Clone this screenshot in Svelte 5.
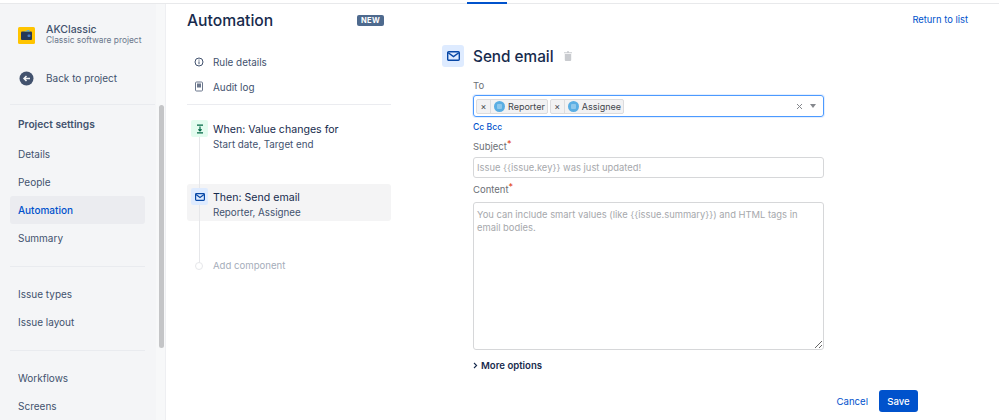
<script>
  const groups = [
    { title: 'Project settings', items: ['Details', 'People', 'Automation', 'Summary'] },
    { items: ['Issue types', 'Issue layout'] },
    { items: ['Workflows', 'Screens'] }
  ]
</script>

<div class="page">
  <div class="topline"><span class="tab-mark"></span></div>
  <div class="body">
    <aside class="sidebar">
      <div class="nav">
        <div class="project">
          <svg class="logo" width="17" height="17" viewBox="0 0 17 17">
            <rect width="17" height="17" rx="1.5" fill="#ffc400"/>
            <rect x="3" y="4.5" width="11" height="8.5" rx="1" fill="#253858"/>
            <path d="M6 4.5 L11 2.8 L12 4.5Z" fill="#4fade6"/>
            <rect x="9.5" y="7.5" width="3" height="2.5" rx="1" fill="#4c7fc4"/>
          </svg>
          <div>
            <div class="project-name">AKClassic</div>
            <div class="project-type">Classic software project</div>
          </div>
        </div>
        <div class="back">
          <svg width="15" height="15" viewBox="0 0 15 15">
            <circle cx="7.5" cy="7.5" r="7" fill="#42526e"/>
            <path d="M11 7.5H5M7.5 5L5 7.5L7.5 10" fill="none" stroke="#f4f5f7" stroke-width="1.5"/>
          </svg>
          <span>Back to project</span>
        </div>
        {#each groups as group}
          <div class="group" class:wide={group.title}>
            {#if group.title}<div class="group-title">{group.title}</div>{/if}
            {#each group.items as item}
              <div class="nav-item" class:active={item === 'Automation'}>{item}</div>
            {/each}
          </div>
        {/each}
      </div>
      <div class="scroll"><div class="thumb"></div></div>
    </aside>

    <main class="main">
      <section class="rule">
        <div class="rule-head">
          <h1>Automation</h1>
          <span class="lozenge">NEW</span>
        </div>
        <div class="links">
          <div class="link-row">
            <svg width="10" height="10" viewBox="0 0 10 10">
              <circle cx="5" cy="5" r="4" fill="none" stroke="#42526e"/>
              <path d="M5 4.4V7.2M5 2.6V3.6" stroke="#42526e"/>
            </svg>
            <span>Rule details</span>
          </div>
          <div class="link-row">
            <svg width="10" height="11" viewBox="0 0 10 11">
              <rect x="1.5" y="1" width="7" height="9" rx="1" fill="none" stroke="#6b778c"/>
              <rect x="3" y="2.5" width="4" height="4" fill="#6b778c"/>
            </svg>
            <span>Audit log</span>
          </div>
        </div>
        <div class="steps">
          <div class="line"></div>
          <div class="step first">
            <span class="step-icon green">
              <svg width="10" height="10" viewBox="0 0 10 10">
                <path d="M2 1.2H8M2 8.8H8M5 2.5V7M3.4 5.4L5 7L6.6 5.4" fill="none" stroke="#006644" stroke-width="1.2"/>
              </svg>
            </span>
            <div>
              <div class="step-title">When: Value changes for</div>
              <div class="step-sub">Start date, Target end</div>
            </div>
          </div>
          <div class="step selected">
            <span class="step-icon blue">
              <svg width="10" height="8" viewBox="0 0 10 8">
                <rect x=".6" y=".6" width="8.8" height="6.8" rx=".8" fill="none" stroke="#0747a6" stroke-width="1.2"/>
                <path d="M1 1.5L5 4.4L9 1.5" fill="none" stroke="#0747a6" stroke-width="1.2"/>
              </svg>
            </span>
            <div>
              <div class="step-title">Then: Send email</div>
              <div class="step-sub">Reporter, Assignee</div>
            </div>
          </div>
          <div class="add">
            <span class="dot"></span>
            <span>Add component</span>
          </div>
        </div>
      </section>

      <section class="editor">
        <a class="return" href="#top">Return to list</a>
        <div class="editor-head">
          <span class="head-icon">
            <svg width="13" height="10" viewBox="0 0 13 10">
              <rect x=".7" y=".7" width="11.6" height="8.6" rx="1" fill="none" stroke="#0747a6" stroke-width="1.4"/>
              <path d="M1.2 1.7L6.5 5.6L11.8 1.7" fill="none" stroke="#0747a6" stroke-width="1.4"/>
            </svg>
          </span>
          <h2>Send email</h2>
          <svg class="trash" width="8" height="10" viewBox="0 0 8 10">
            <path d="M0 1.2H8V2.2H0ZM3 .2H5V1.2H3ZM.8 3H7.2V9a1 1 0 0 1-1 1H1.8a1 1 0 0 1-1-1Z" fill="#c9cbcf"/>
          </svg>
        </div>
        <div class="form">
          <div class="label to-label">To</div>
          <div class="multi">
            {#each ['Reporter', 'Assignee'] as who}
              <span class="chip">
                <span class="chip-x">×</span>
                <span class="chip-main">
                  <span class="avatar"><span></span></span>
                  {who}
                </span>
              </span>
            {/each}
            <span class="multi-tools">
              <svg width="7" height="7" viewBox="0 0 7 7">
                <path d="M1 1L6 6M6 1L1 6" stroke="#85888d" stroke-width="1"/>
              </svg>
              <span class="caret"></span>
            </span>
          </div>
          <div class="ccbcc">Cc Bcc</div>
          <div class="label">Subject<span class="req">*</span></div>
          <input class="field" placeholder={'Issue {{issue.key}} was just updated!'} />
          <div class="label content-label">Content<span class="req">*</span></div>
          <textarea class="field area" placeholder={'You can include smart values (like {{issue.summary}}) and HTML tags in email bodies.'}></textarea>
          <div class="more">
            <svg width="5" height="7" viewBox="0 0 5 7">
              <path d="M1 1L3.6 3.5L1 6" fill="none" stroke="#172b4d" stroke-width="1.1"/>
            </svg>
            <span>More options</span>
          </div>
          <div class="actions">
            <span class="cancel">Cancel</span>
            <button class="save" type="button">Save</button>
          </div>
        </div>
      </section>
    </main>
  </div>
</div>

<style>
  :global(body) {
    margin: 0;
    background: #fff;
    font-family: Inter, "Noto Sans", sans-serif;
    color: #172b4d;
  }
  .page {
    width: 999px;
    height: 420px;
    overflow: hidden;
    position: relative;
  }
  .topline {
    height: 4px;
    background: #fff;
    border-bottom: 1px solid #e8e9eb;
    box-sizing: border-box;
    padding-left: 467px;
    padding-top: 2px;
  }
  .tab-mark {
    display: block;
    width: 40px;
    height: 2px;
    background: #0052cc;
    position: relative;
  }
  .body { display: flex; height: 416px; }

  .sidebar {
    width: 166px;
    flex: none;
    background: #f4f5f7;
    display: flex;
    border-right: 1px solid #eeeff2;
    box-sizing: border-box;
  }
  .nav { width: 156px; flex: none; padding-left: 10px; box-sizing: border-box; }
  .project { display: flex; align-items: center; gap: 11px; padding: 16px 0 0 8px; height: 30px; }
  .project-name { font-size: 10.5px; font-weight: 500; color: #42526e; line-height: 10px; }
  .project-type { font-size: 8.4px; color: #6b778c; line-height: 10px; }
  .back {
    display: flex; align-items: center; gap: 12px;
    padding-left: 9px;
    margin-top: 18px;
    height: 20px;
    font-size: 10px;
    color: #42526e;
  }
  .group { border-top: 1px solid #e9ebef; padding: 13px 0 14px; width: 135px; }
  .group.wide { width: 145px; margin-top: 16px; }
  .group-title { font-size: 10.2px; font-weight: 600; color: #42526e; padding: 0 8px; height: 22px; line-height: 13px; }
  .nav-item {
    width: 135px;
    box-sizing: border-box;
    height: 28px;
    line-height: 28px;
    padding: 0 8px;
    font-size: 10px;
    color: #42526e;
    border-radius: 3px;
  }
  .nav-item.active { background: #ebecf0; color: #0052cc; font-weight: 500; }
  .scroll { flex: 1; background: #f7f8f9; }
  .thumb { width: 5px; height: 243px; margin: 101px 0 0 3px; border-radius: 3px; background: #c4c5c7; }

  .main { flex: 1; display: flex; min-width: 0; }
  .rule { width: 204px; margin-left: 21px; flex: none; }
  .rule-head { display: flex; align-items: center; height: 32px; }
  h1 { margin: 0; font-size: 15.7px; font-weight: 500; color: #172b4d; flex: 1; }
  .lozenge {
    background: #4e6a8e;
    color: #fff;
    font-size: 7.5px;
    font-weight: 700;
    border-radius: 2px;
    padding: 0 4px;
    margin-right: 7px;
    line-height: 11px;
    letter-spacing: .3px;
  }
  .links { padding: 14px 0 5px 7px; border-bottom: 1px solid #ebecf0; }
  .link-row {
    display: flex; align-items: center; gap: 9px;
    height: 24.5px;
    font-size: 9.9px;
    color: #42526e;
  }
  .steps { position: relative; padding-top: 11px; }
  .line { position: absolute; left: 12px; top: 31px; width: 1px; height: 127px; background: #e6e7ea; z-index: 1; }
  .step { display: flex; gap: 5px; position: relative; padding: 6px 0 0 4px; height: 37px; box-sizing: border-box; border-radius: 3px; }
  .step.first { margin-bottom: 31px; }
  .step.selected { background: #f4f4f5; }
  .step-icon { width: 17px; height: 17px; border-radius: 2px; display: flex; align-items: center; justify-content: center; flex: none; margin-top: -2px; position: relative; z-index: 2; }
  .green { background: #e3fcef; }
  .blue { background: #deebff; }
  .step-title { font-size: 10.6px; line-height: 15px; color: #172b4d; }
  .step-sub { font-size: 9.8px; line-height: 15px; color: #42526e; }
  .add {
    display: flex; align-items: center; gap: 10px;
    position: relative;
    z-index: 2;
    margin: 39px 0 0 8px;
    font-size: 9.6px;
    color: #a5adba;
  }
  .dot { width: 8px; height: 8px; border-radius: 50%; background: #fff; border: 1px solid #e6e7ea; box-sizing: border-box; }

  .editor { flex: 1; position: relative; margin-left: 51px; padding-top: 40px; }
  .return { position: absolute; right: 31px; top: 10px; font-size: 9.4px; color: #0052cc; text-decoration: none; }
  .editor-head { display: flex; align-items: center; height: 24px; }
  .head-icon { width: 22px; height: 22px; border-radius: 3px; background: #deebff; display: flex; align-items: center; justify-content: center; }
  h2 { margin: 0 0 0 9px; font-size: 15.3px; font-weight: 500; color: #172b4d; }
  .trash { margin-left: 10px; }
  .form { width: 351px; margin-left: 31px; position: relative; }
  .label { font-size: 9.5px; color: #6b6f76; line-height: 14px; }
  .to-label { margin-top: 11px; margin-bottom: 2px; }
  .req { color: #de350b; vertical-align: 3px; font-size: 9px; line-height: 0; }
  .multi {
    height: 22px;
    box-sizing: border-box;
    border: 1px solid #4c9aff;
    border-radius: 3px;
    box-shadow: 0 0 0 1px #e4effe;
    display: flex;
    align-items: center;
    gap: 2px;
    padding-left: 2px;
  }
  .chip {
    display: flex;
    height: 15px;
    box-sizing: border-box;
    background: #f2f2f3;
    border: 1px solid #dcdcde;
    border-radius: 2px;
    font-size: 9px;
    line-height: 13px;
    color: #43464b;
  }
  .chip-x { width: 13px; text-align: center; border-right: 1px solid #dcdcde; }
  .chip-main { display: flex; align-items: center; gap: 3px; padding: 0 2px 0 3px; }
  .avatar { width: 11px; height: 11px; border-radius: 50%; background: #5aaee3; display: flex; align-items: center; justify-content: center; }
  .avatar span { width: 5px; height: 5px; background: #8ec8ec; border-radius: 1px; }
  .multi-tools { margin-left: auto; display: flex; align-items: center; gap: 7px; padding-right: 7px; }
  .caret { width: 0; height: 0; border: 3.5px solid transparent; border-top: 4px solid #85888d; border-bottom: 0; }
  .ccbcc { font-size: 8.6px; font-weight: 500; color: #0052cc; margin: 4px 0 7px; line-height: 12px; }
  .field {
    display: block;
    width: 100%;
    box-sizing: border-box;
    border: 1px solid #d6d7d9;
    border-radius: 3px;
    font-family: inherit;
    font-size: 9.4px;
    padding: 0 3px;
    height: 21px;
    margin-top: 3px;
    background: #fff;
    outline: none;
  }
  .field::placeholder { color: #a6a8ac; opacity: 1; }
  .content-label { margin-top: 5px; }
  .area { height: 148px; padding: 5px 3px; line-height: 13px; resize: vertical; margin-top: 5px; }
  .more {
    display: flex; align-items: center; gap: 3px;
    margin-top: 9px;
    font-size: 9.6px;
    font-weight: 600;
    color: #172b4d;
    line-height: 13px;
  }
  .actions { display: flex; justify-content: flex-end; align-items: center; gap: 11px; margin: 18px 0 0 0; width: 445px; }
  .cancel { font-size: 9.6px; color: #0052cc; }
  .save {
    width: 39px; height: 22px;
    background: #0052cc;
    color: #fff;
    border: 0;
    border-radius: 3px;
    font-family: inherit;
    font-size: 9.6px;
    font-weight: 500;
    padding: 0;
  }
</style>
